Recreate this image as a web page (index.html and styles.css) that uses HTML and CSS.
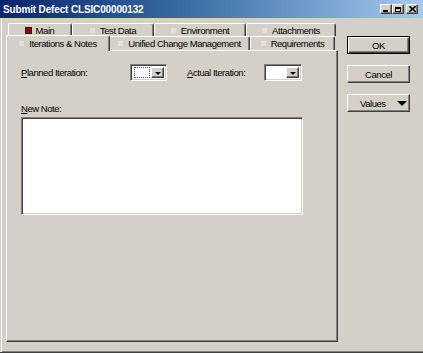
FILE: index.html
```html
<!DOCTYPE html>
<html lang="en">
<head>
<meta charset="UTF-8">
<title>Submit Defect</title>
<link rel="stylesheet" href="styles.css">
</head>
<body>

<div class="window">
    <div class="titlebar">
        <span class="title">Submit Defect CLSIC00000132</span>
        <div class="ctrls">
            <span class="cb"><span class="min-glyph"></span></span>
            <span class="cb"><span class="max-glyph"></span></span>
            <span class="cb close">
                <svg width="7" height="6" viewBox="0 0 7 6"><path d="M0 0 L7 6 M7 0 L0 6" stroke="#000" stroke-width="1.6"/></svg>
            </span>
        </div>
    </div>

    <div class="main">
        <div class="tabarea">
            <div class="tabrow row1">
                <div class="tab t-main"><span class="sq red"></span>Main</div>
                <div class="tab t-test"><span class="sq"></span>Test Data</div>
                <div class="tab t-env"><span class="sq"></span>Environment</div>
                <div class="tab t-att"><span class="sq"></span>Attachments</div>
            </div>
            <div class="tabrow row2">
                <div class="tab t-iter active"><span class="sq"></span>Iterations &amp; Notes</div>
                <div class="tab t-ucm"><span class="sq"></span>Unified Change Management</div>
                <div class="tab t-req"><span class="sq"></span>Requirements</div>
            </div>
            <div class="panel">
                <div class="iter-row">
                    <label class="lbl lbl-planned"><u>P</u>lanned Iteration:</label>
                    <div class="combo focused">
                        <div class="combo-text"><span class="focus-rect"></span></div>
                        <div class="drop"><span class="tri"></span></div>
                    </div>
                    <label class="lbl lbl-actual"><u>A</u>ctual Iteration:</label>
                    <div class="combo">
                        <div class="combo-text"></div>
                        <div class="drop"><span class="tri"></span></div>
                    </div>
                </div>
                <label class="lbl note-lbl"><u>N</u>ew Note:</label>
                <div class="note-box"></div>
            </div>
        </div>

        <div class="side">
            <div class="btn default"><span>OK</span></div>
            <div class="btn"><span>Cancel</span></div>
            <div class="btn values"><span>Values</span><span class="btn-tri"></span></div>
        </div>
    </div>
</div>

</body>
</html>
```

FILE: styles.css
```css
body {
    margin: 0;
    padding: 0;
    background-color: #d4d0c8;
    font-family: "Liberation Sans", Arial, sans-serif;
}
.window {
    width: 423px;
    height: 353px;
    box-sizing: border-box;
    background-color: #d4d0c8;
    border-bottom: 1px solid #404040;
    box-shadow: inset 1px 0 #d4d0c8, inset 2px 0 #fff, inset 0 -1px #808080;
    overflow: hidden;
}
.titlebar {
    height: 18px;
    background: linear-gradient(to right, #0a246a 0%, #3a6ea5 45%, #a6caf0 100%);
    display: flex;
    align-items: center;
    justify-content: space-between;
}
.title {
    color: #fff;
    font-weight: bold;
    font-size: 10px;
    letter-spacing: -0.15px;
    padding-left: 3px;
}
.ctrls {
    display: flex;
    margin-right: 5px;
}
.cb {
    width: 12px;
    height: 10px;
    box-sizing: border-box;
    background-color: #d4d0c8;
    border: 1px solid;
    border-color: #fff #404040 #404040 #fff;
    box-shadow: inset -1px -1px #808080;
    display: flex;
    align-items: center;
    justify-content: center;
}
.cb.close {
    margin-left: 2px;
}
.min-glyph {
    width: 5px;
    height: 2px;
    background: #000;
    margin-top: 4px;
    margin-right: 2px;
}
.max-glyph {
    width: 6px;
    height: 5px;
    box-sizing: border-box;
    border: 1px solid #000;
    border-top-width: 2px;
}
.main {
    display: flex;
}
.tabarea {
    width: 332px;
    margin-left: 6px;
    margin-top: 5px;
}
.tabrow {
    display: flex;
    height: 14px;
    font-size: 9.5px;
    letter-spacing: -0.45px;
}
.row1 {
    height: 13px;
    margin-left: 2px;
}
.row2 {
    margin-left: 2px;
    position: relative;
    z-index: 1;
}
.tab {
    box-sizing: border-box;
    height: 100%;
    display: flex;
    align-items: center;
    justify-content: center;
    border-top: 1px solid #fff;
    border-left: 1px solid #fff;
    border-right: 1px solid #404040;
    box-shadow: inset -1px 0 #808080;
    border-radius: 2px 2px 0 0;
    color: #000;
    white-space: nowrap;
}
.tab.active {
    margin-left: -2px;
    margin-right: -1px;
    height: 16px;
    margin-top: -1px;
    border-bottom: none;
    background-color: #d4d0c8;
    position: relative;
    z-index: 2;
}
.sq {
    width: 5px;
    height: 5px;
    background-color: #e4e1dc;
    margin-right: 5px;
}
.sq.red {
    background-color: #8a0a14;
    box-shadow: 0 0 0 1px #3a1010;
}
.t-main { width: 64px; }
.t-test { width: 82px; }
.t-env { width: 92px; }
.t-att { width: 90px; }
.t-iter { width: 104px; }
.t-ucm { width: 141px; }
.t-req { width: 85px; }

.panel {
    height: 292px;
    box-sizing: border-box;
    border-top: 1px solid #fff;
    border-left: 1px solid #fff;
    border-right: 1px solid #404040;
    border-bottom: 1px solid #404040;
    box-shadow: inset -1px -1px #808080;
    padding: 13px 0 0 14px;
}
.lbl {
    display: block;
    font-size: 9.5px;
    letter-spacing: -0.45px;
    color: #000;
}
.iter-row {
    display: flex;
    align-items: center;
    height: 17px;
}
.lbl-planned {
    width: 109px;
}
.lbl-actual {
    width: 77px;
    margin-left: 20px;
}
.combo {
    width: 38px;
    height: 17px;
    box-sizing: border-box;
    background-color: #fff;
    border: 1px solid;
    border-color: #808080 #fff #fff #808080;
    box-shadow: inset 1px 1px #404040, inset -1px -1px #d4d0c8;
    display: flex;
    padding: 2px;
}
.combo.focused {
    width: 37px;
}
.combo-text {
    flex: 1;
    display: flex;
    padding: 0 1px;
}
.focus-rect {
    flex: 1;
    border: 1px dotted #555;
}
.drop {
    width: 13px;
    box-sizing: border-box;
    background-color: #d4d0c8;
    border: 1px solid;
    border-color: #fff #404040 #404040 #fff;
    box-shadow: inset -1px -1px #808080;
    display: flex;
    align-items: center;
    justify-content: center;
}
.tri {
    width: 0;
    height: 0;
    border-left: 3px solid transparent;
    border-right: 3px solid transparent;
    border-top: 3px solid #000;
    margin-top: 1px;
}
.note-lbl {
    margin-top: 22px;
}
.note-box {
    width: 282px;
    height: 98px;
    box-sizing: border-box;
    margin-top: 3px;
    background-color: #fff;
    border: 1px solid;
    border-color: #808080 #fff #fff #808080;
    box-shadow: inset 1px 1px #404040, inset -1px -1px #d4d0c8;
}
.side {
    margin-left: 9px;
    margin-top: 18px;
    display: flex;
    flex-direction: column;
    gap: 11px;
}
.btn {
    width: 63px;
    height: 18px;
    box-sizing: border-box;
    border: 1px solid;
    border-color: #fff #404040 #404040 #fff;
    box-shadow: inset -1px -1px #808080;
    display: flex;
    align-items: center;
    justify-content: center;
    font-size: 9.5px;
    letter-spacing: -0.45px;
    color: #000;
}
.btn.default {
    border: 1px solid #000;
    box-shadow: inset 1px 1px #fff, inset -1px -1px #404040, inset -2px -2px #808080;
}
.btn.values {
    justify-content: flex-start;
    padding-left: 12px;
}
.btn-tri {
    width: 0;
    height: 0;
    border-left: 5px solid transparent;
    border-right: 5px solid transparent;
    border-top: 5px solid #000;
    margin-left: 11px;
}
```
